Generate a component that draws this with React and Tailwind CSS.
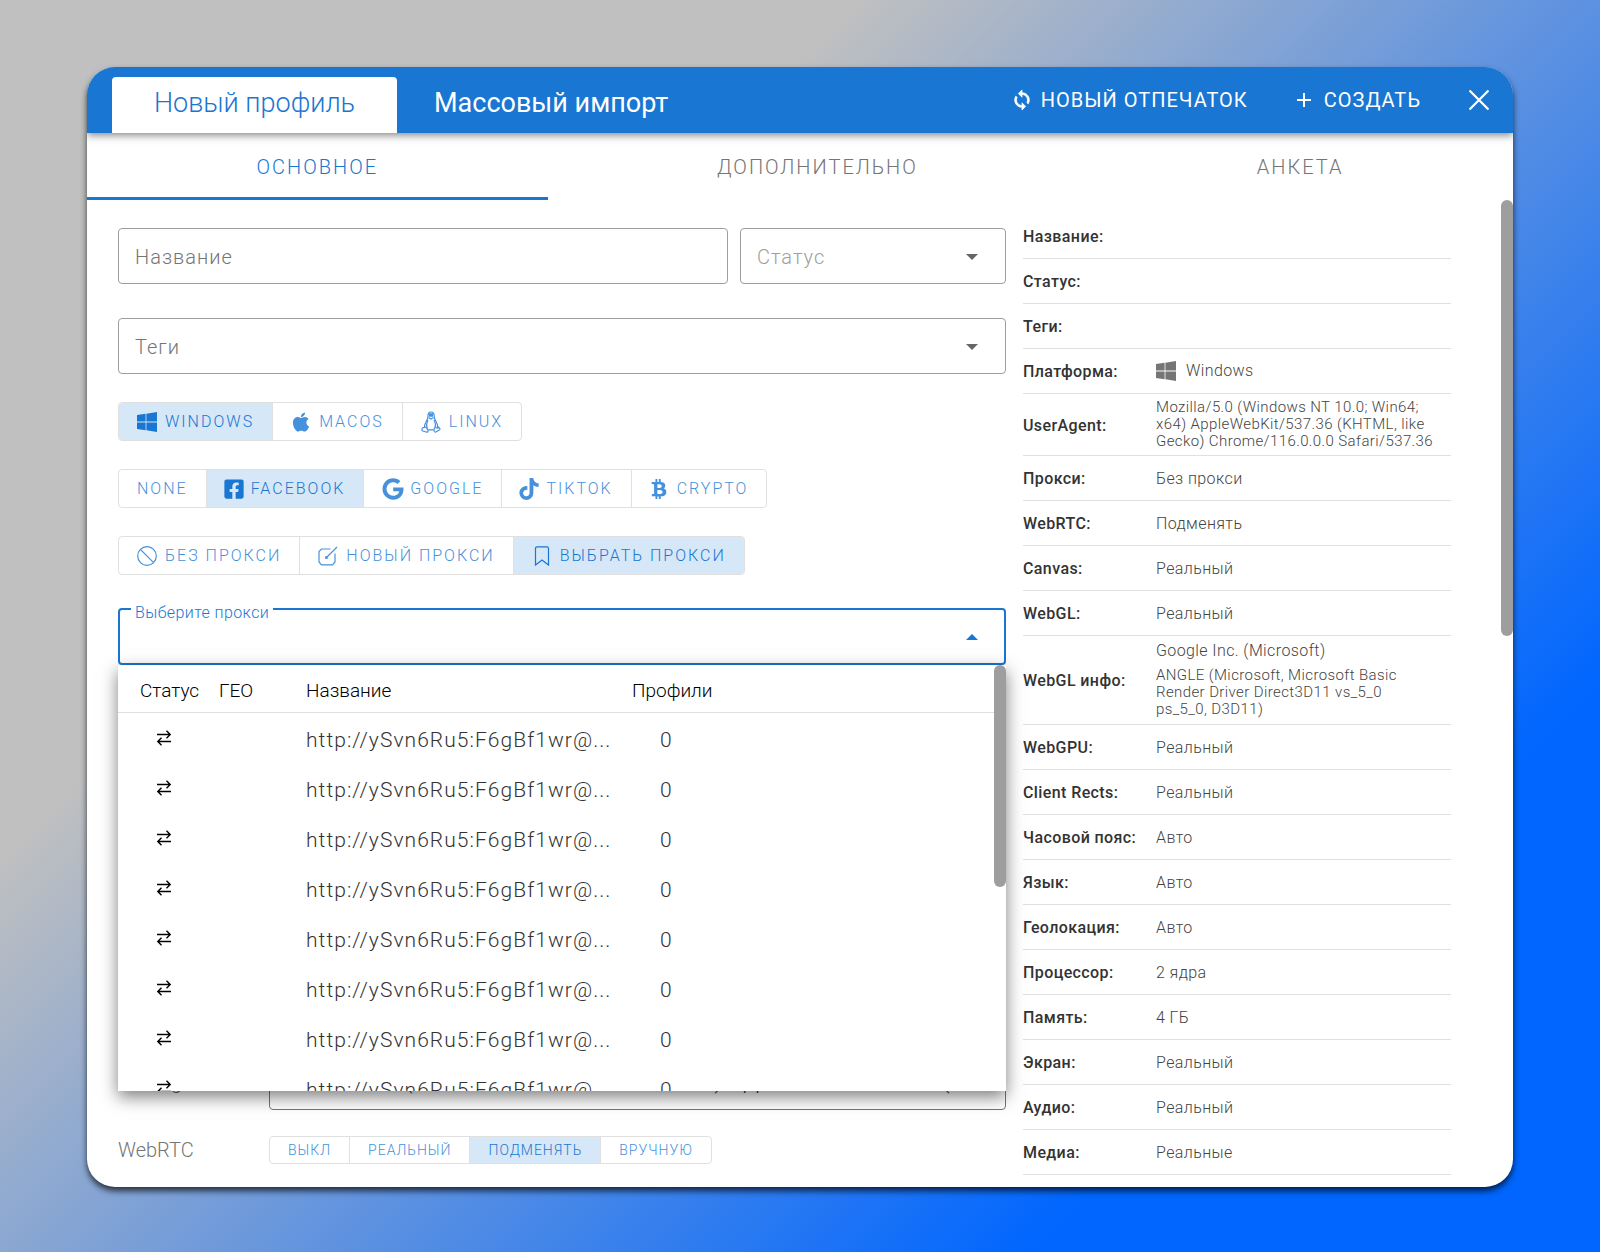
import React, { useState } from "react";
import { FaApple, FaBtc, FaFacebookSquare, FaGoogle, FaTiktok } from "react-icons/fa";

const WindowsIcon = ({ className }) => (
    <svg viewBox="0 0 20 20" className={className} fill="currentColor" aria-hidden="true">
        <path d="M0 3 8.6 1.8v7.8H0zM9.4 1.7 20 0v9.6H9.4zM0 10.4h8.6v7.8L0 17zM9.4 10.4H20V20L9.4 18.3z" />
    </svg>
);

const LinuxIcon = ({ className }) => (
    <svg viewBox="0 0 20 22" className={className} fill="none" stroke="currentColor" strokeWidth="1.2" aria-hidden="true">
        <path d="M7 5.5C6.8 2.500 8 1 10 1s3.300 1.500 3.200 4.500c0 2.200 1 3.500 2 5.200 1.300 2.300 1.700 4.300 1.300 6.300M7 5.500c0 2.200-1.200 3.800-2.200 5.700-1 1.800-1.500 3.500-1.300 5.300" />
        <path d="M7.500 6.500 10 8l2.500-1.500M7 9c-1.500 3-2 5.500-.5 8.500M13 9c1.600 3 1.800 5 1.200 7M7.500 18.800h5.200" />
        <path d="M3.500 16.300c1.500-.8 2.500 1 3.500 2.700.7 1.500-.5 2.300-2 2-1.500-.4-3-.8-3.800-1.200-.7-.5 0-1.700 0-2.500 0-.9 1.300-.5 2.300-1zM14 16c-1 1.500-1.300 3.500-.8 4.500.8 1 2 .5 2.800-.2 1-.8 2.500-1.200 3-2 .3-.7-1-1.300-1.500-2.200C16.700 17.500 15 17.500 14 16z" />
        <path d="M8 2.300h4v3.400H8z" fill="currentColor" stroke="none" />
    </svg>
);

const BanIcon = ({ className }) => (
    <svg viewBox="0 0 20 20" className={className} fill="none" stroke="currentColor" strokeWidth="1.2" aria-hidden="true">
        <circle cx="10" cy="10" r="9.3" />
        <path d="M3.400 3.400 16.600 16.600" />
    </svg>
);

const EditIcon = ({ className }) => (
    <svg viewBox="0 0 20 20" className={className} fill="none" stroke="currentColor" strokeWidth="1.2" aria-hidden="true">
        <path d="M12.500 3H3.500L1 5.500V16l2.500 2.800h11L17 16V7.500" />
        <path d="M7.500 12.500 19 1M7.500 12.500l.5-2.500M7.500 12.500l2.500-.5" />
    </svg>
);

const BookmarkIcon = ({ className }) => (
    <svg viewBox="0 0 20 20" className={className} fill="none" stroke="currentColor" strokeWidth="1.2" aria-hidden="true">
        <path d="M3.500 19V2.500Q3.500.8 5.200.8h9.600Q16.500.8 16.500 2.500V19L10 14z" />
    </svg>
);

const SwapIcon = ({ className }) => (
    <svg viewBox="0 0 16 16" className={className} fill="none" stroke="currentColor" strokeWidth="1.4" aria-hidden="true">
        <path d="M1 4.500h13.500M10.500.8 14.200 4.500l-3.700 3.700M15 11.500H1.500M5.500 15.200 1.800 11.500l3.700-3.700" />
    </svg>
);

const SyncIcon = ({ className }) => (
    <svg viewBox="0 0 24 24" className={className} fill="currentColor" stroke="currentColor" strokeWidth="0.8" aria-hidden="true">
        <path d="M12 4V1L8 5l4 4V6c3.310 0 6 2.690 6 6 0 1.010-.25 1.970-.7 2.800l1.460 1.460C19.540 15.030 20 13.570 20 12c0-4.420-3.580-8-8-8zm0 14c-3.310 0-6-2.690-6-6 0-1.010.25-1.970.7-2.800L5.240 7.740C4.460 8.970 4 10.430 4 12c0 4.420 3.580 8 8 8v3l4-4-4-4v3z" />
    </svg>
);

const PlusIcon = ({ className }) => (
    <svg viewBox="0 0 16 16" className={className} stroke="currentColor" strokeWidth="2" aria-hidden="true">
        <path d="M8 1v14M1 8h14" />
    </svg>
);

const CloseIcon = ({ className }) => (
    <svg viewBox="0 0 20 20" className={className} stroke="currentColor" strokeWidth="2.2" aria-hidden="true">
        <path d="M.5.5l19 19M19.500.5l-19 19" />
    </svg>
);

const Caret = ({ className }) => (
    <svg viewBox="0 0 12 6" className={className} fill="currentColor" aria-hidden="true">
        <path d="M0 0h12L6 6z" />
    </svg>
);

const platforms = [
    { id: "windows", text: "WINDOWS", icon: <WindowsIcon className="size-5" /> },
    { id: "macos", text: "MACOS", icon: <FaApple className="h-[22px] w-5" /> },
    { id: "linux", text: "LINUX", icon: <LinuxIcon className="h-[22px] w-5" /> },
];

const sites = [
    { id: "none", text: "NONE" },
    { id: "facebook", text: "FACEBOOK", icon: <FaFacebookSquare className="-mx-[2px] size-[22px]" /> },
    { id: "google", text: "GOOGLE", icon: <FaGoogle className="-mr-[2px] size-[22px]" /> },
    { id: "tiktok", text: "TIKTOK", icon: <FaTiktok className="-mx-[2px] size-[22px]" /> },
    { id: "crypto", text: "CRYPTO", icon: <FaBtc className="-ml-px size-5" /> },
];

const proxyModes = [
    { id: "no", text: "БЕЗ ПРОКСИ", icon: <BanIcon className="size-5" /> },
    { id: "new", text: "НОВЫЙ ПРОКСИ", icon: <EditIcon className="size-5" /> },
    { id: "pick", text: "ВЫБРАТЬ ПРОКСИ", icon: <BookmarkIcon className="size-5" /> },
];

const webrtcModes = [
    { id: "off", text: "ВЫКЛ" },
    { id: "real", text: "РЕАЛЬНЫЙ" },
    { id: "replace", text: "ПОДМЕНЯТЬ" },
    { id: "manual", text: "ВРУЧНУЮ" },
];

const proxies = [1, 2, 3, 4, 5, 6, 7, 8].map((id) => ({
    id,
    name: "http://ySvn6Ru5:F6gBf1wr@...",
    profiles: 0,
}));

const userAgent =
    "Mozilla/5.0 (Windows NT 10.0; Win64; x64) AppleWebKit/537.36 (KHTML, like Gecko) Chrome/116.0.0.0 Safari/537.36";

const summary = [
    ["Название:", ""],
    ["Статус:", ""],
    ["Теги:", ""],
    ["Платформа:", "Windows", "platform"],
    ["UserAgent:", userAgent, "agent"],
    ["Прокси:", "Без прокси"],
    ["WebRTC:", "Подменять"],
    ["Canvas:", "Реальный"],
    ["WebGL:", "Реальный"],
    ["WebGL инфо:", "ANGLE (Microsoft, Microsoft Basic Render Driver Direct3D11 vs_5_0 ps_5_0, D3D11)", "webgl"],
    ["WebGPU:", "Реальный"],
    ["Client Rects:", "Реальный"],
    ["Часовой пояс:", "Авто"],
    ["Язык:", "Авто"],
    ["Геолокация:", "Авто"],
    ["Процессор:", "2 ядра"],
    ["Память:", "4 ГБ"],
    ["Экран:", "Реальный"],
    ["Аудио:", "Реальный"],
    ["Медиа:", "Реальные"],
];

const rowHeights = { agent: "h-[62px]", webgl: "h-[89px]" };

const ButtonGroup = ({ items, initial, small }) => {
    const [value, setValue] = useState(initial);
    return (
        <div className="flex w-fit rounded border border-[#e0e0e0] overflow-hidden">
            {items.map((item) => (
                <button
                    key={item.id}
                    onClick={() => setValue(item.id)}
                    className={`flex items-center gap-2 px-[18px] border-r border-[#e0e0e0] last:border-r-0 whitespace-nowrap font-light ${
                        small ? "h-[26px] text-sm tracking-[1px]" : "h-[37px] text-base tracking-[2px]"
                    } ${value === item.id ? "bg-[#d6e7f7] text-[#1976d2]" : "text-[#4691dc]"}`}
                >
                    {item.icon}
                    {item.text}
                </button>
            ))}
        </div>
    );
};

const SummaryValue = ({ text, kind }) => {
    if (kind === "platform") {
        return (
            <span className="flex items-center gap-[10px]">
                <WindowsIcon className="size-5 text-[#757575]" />
                {text}
            </span>
        );
    }
    if (kind === "agent") {
        return <p className="text-[15px] leading-[17px]">{text}</p>;
    }
    if (kind === "webgl") {
        return (
            <>
                <p className="mb-2">Google Inc. (Microsoft)</p>
                <p className="pr-8 text-[15px] leading-[17px]">{text}</p>
            </>
        );
    }
    return text;
};

const ProxyMenu = () => (
    <div className="absolute left-0 right-0 top-full z-10 h-[426px] overflow-hidden bg-white shadow-[0_6px_16px_rgba(0,0,0,0.5)]">
        <table className="w-full table-fixed text-left text-black font-light">
            <thead>
                <tr className="h-[47px] border-b border-[#e0e0e0] text-[19px]">
                    <th className="w-[92px] pl-[22px] pt-[6px] font-light">Статус</th>
                    <th className="w-[96px] pl-[9px] pt-[6px] font-light">ГЕО</th>
                    <th className="w-[326px] pt-[6px] font-light">Название</th>
                    <th className="pt-[6px] font-light">Профили</th>
                </tr>
            </thead>
            <tbody className="text-[21px] leading-6 text-[#333]">
                {proxies.map((proxy) => (
                    <tr key={proxy.id} className="h-[50px]">
                        <td className="pl-[38px] pt-[2px] text-black"><SwapIcon className="size-4" /></td>
                        <td></td>
                        <td className="whitespace-nowrap pt-[6px] tracking-wider">{proxy.name}</td>
                        <td className="pl-7 pt-[6px]">{proxy.profiles}</td>
                    </tr>
                ))}
            </tbody>
        </table>
        <div className="absolute right-0 top-0 h-[222px] w-3 rounded-full bg-[#9e9e9e]"></div>
    </div>
);

export default function App() {
    return (
        <div className="min-h-screen px-[87px] py-[67px] font-['Roboto','Liberation_Sans',sans-serif] bg-[linear-gradient(135deg,#c0c0c0_30%,#0066ff_80%)]">
            <div className="relative overflow-hidden rounded-[28px] bg-white shadow-[0_4px_6px_rgba(0,0,0,0.7)]">
                <header className="relative z-10 flex h-[66px] items-end bg-[#1976d2] pl-[25px] pr-6 text-white shadow-[0_2px_8px_rgba(0,0,0,0.5)]">
                    <button className="h-14 w-[285px] rounded-t bg-white pb-1 text-[27px] font-light text-[#1976d2]">Новый профиль</button>
                    <button className="h-14 px-[37px] pb-1 text-[27px] font-normal">Массовый импорт</button>
                    <div className="ml-auto flex h-full items-center gap-12 text-xl tracking-wider">
                        <button className="flex items-center gap-2"><SyncIcon className="size-[22px]" />НОВЫЙ ОТПЕЧАТОК</button>
                        <button className="flex items-center gap-3"><PlusIcon className="size-4" />СОЗДАТЬ</button>
                        <button aria-label="Закрыть"><CloseIcon className="size-5" /></button>
                    </div>
                </header>

                <nav className="flex h-[67px] text-xl font-light tracking-widest text-[#757575]">
                    <a href="#main" className="flex flex-auto items-center justify-center border-b-3 border-[#1976d2] pt-1 text-[#1976d2]">ОСНОВНОЕ</a>
                    <a href="#extra" className="flex flex-auto items-center justify-center border-b-3 border-transparent pt-1">ДОПОЛНИТЕЛЬНО</a>
                    <a href="#form" className="flex flex-auto items-center justify-center border-b-3 border-transparent pt-1">АНКЕТА</a>
                </nav>

                <main className="flex gap-[17px] pb-3 pl-[31px] pr-[62px] pt-[13px]">
                    <div className="flex min-w-0 flex-1 flex-col pb-[11px] pt-[15px]">
                        <div className="flex gap-3">
                            <input aria-label="Название" placeholder="Название" className="h-14 min-w-0 flex-1 rounded border border-[#9e9e9e] px-4 pt-[2px] text-xl font-light tracking-wider placeholder:text-[#757575]" />
                            <div className="relative w-[266px]">
                                <select aria-label="Статус" className="h-14 w-full appearance-none rounded border border-[#9e9e9e] px-4 pt-[2px] text-xl font-light tracking-wider text-[#9e9e9e]">
                                    <option>Статус</option>
                                </select>
                                <Caret className="pointer-events-none absolute right-7 top-[26px] h-[6px] w-3 text-[#666]" />
                            </div>
                        </div>

                        <div className="relative mt-[34px]">
                            <select aria-label="Теги" className="h-14 w-full appearance-none rounded border border-[#9e9e9e] px-4 pt-[2px] text-xl font-light tracking-wider text-[#757575]">
                                <option>Теги</option>
                            </select>
                            <Caret className="pointer-events-none absolute right-7 top-[26px] h-[6px] w-3 text-[#666]" />
                        </div>

                        <div className="mt-7 flex flex-col gap-7">
                            <ButtonGroup items={platforms} initial="windows" />
                            <ButtonGroup items={sites} initial="facebook" />
                            <ButtonGroup items={proxyModes} initial="pick" />
                        </div>

                        <div className="relative mt-[33px]">
                            <select id="proxy" className="h-[57px] w-full appearance-none rounded border-2 border-[#1976d2] px-4">
                                <option></option>
                            </select>
                            <label htmlFor="proxy" className="absolute left-[13px] top-[-5px] bg-white px-1 text-base leading-5 font-light tracking-wide text-[#1976d2]">Выберите прокси</label>
                            <Caret className="pointer-events-none absolute right-7 top-[26px] h-[6px] w-3 rotate-180 text-[#1976d2]" />
                            <ProxyMenu />
                        </div>

                        <div className="mt-auto flex items-center">
                            <label htmlFor="agent" className="w-[151px] text-xl font-light text-[#666]">UserAgent</label>
                            <input id="agent" defaultValue={userAgent} className="h-14 min-w-0 flex-1 rounded border border-[#757575] px-4 text-[21px] font-light tracking-wider text-[#222]" />
                        </div>
                        <div className="mt-[26px] flex items-center">
                            <span className="w-[151px] text-xl font-light text-[#757575]">WebRTC</span>
                            <ButtonGroup items={webrtcModes} initial="replace" small />
                        </div>
                    </div>

                    <table className="w-[428px] table-fixed text-left text-base leading-[17px] tracking-wide text-[#333]">
                        <tbody>
                            {summary.map(([label, text, kind]) => (
                                <tr key={label} className={`border-b border-[#e0e0e0] ${rowHeights[kind] || "h-[45px]"}`}>
                                    <th className="w-[133px] pt-[2px] font-medium">{label}</th>
                                    <td className={`font-light text-[#444] ${kind ? "" : "pt-[2px]"}`}><SummaryValue text={text} kind={kind} /></td>
                                </tr>
                            ))}
                        </tbody>
                    </table>
                </main>
                <div className="absolute right-0 top-[133px] h-[436px] w-3 rounded-full bg-[#9e9e9e]"></div>
            </div>
        </div>
    );
}
